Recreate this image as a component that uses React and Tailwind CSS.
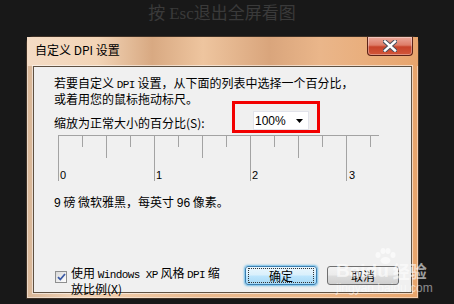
export default function App() {
  const ticks = [];
  for (let i = 0; i <= 13; i++) {
    const x = i * 24 + 0.5;
    const h = i % 4 === 0 ? 46 : i % 2 === 0 ? 23 : 12;
    ticks.push(<line key={i} x1={x} y1={0} x2={x} y2={h} stroke="#a3a3a3" strokeWidth="1" />);
  }

  return (
    <div className="relative w-[454px] h-[304px] overflow-hidden bg-[#181818] font-['Noto_Sans_CJK_SC',sans-serif]">
      <div className="h-[36px] w-[444px] pt-[2px] text-center text-[17px] leading-[20px] text-[#3a3a3a]">
        按 <span className="font-['Liberation_Serif','Noto_Sans_CJK_SC',serif]">Esc</span>退出全屏看图
      </div>

      {/* dialog window */}
      <div className="ml-[26px] w-[393px] h-[263px] rounded-t-[7px] border border-[#3e3025] bg-[linear-gradient(90deg,#d8b697_0%,#f1d2b4_12%,#e9b98e_45%,#ecb585_75%,#e8a56c_100%)] shadow-[inset_0_0_0_1px_rgba(255,255,255,0.45)]">
        <div className="flex h-[29px] items-start justify-between bg-[linear-gradient(90deg,#f4dcc5_0%,#f2d4b6_18%,#d8a982_32%,#eec59f_45%,#d9a57c_62%,#eab68a_75%,#e8a56d_100%)]">
          <span className="pl-[8px] pt-[7px] text-[12px] leading-[12px] text-black">
            自定义 DPI 设置
          </span>
          <div className="mr-[5px] flex h-[19px] w-[46px] items-center justify-center rounded-b-[4px] border border-t-0 border-[#5b2217] bg-[linear-gradient(180deg,#eba89a_0%,#de7d68_45%,#c7432a_55%,#d2573a_100%)] shadow-[inset_0_0_0_1px_rgba(255,255,255,0.35)]">
            <svg width="14" height="12" viewBox="0 0 14 12">
              <path d="M2 1.5 L12 10.5 M12 1.5 L2 10.5" stroke="#4b4f5c" strokeWidth="4.4" strokeLinecap="square" />
              <path d="M2 1.5 L12 10.5 M12 1.5 L2 10.5" stroke="#ffffff" strokeWidth="2.4" strokeLinecap="square" />
            </svg>
          </div>
        </div>

        <div className="relative mx-[6px] h-[227px] border border-[#5f5142] bg-[#f0f0f0] px-[20px] pt-[9px] text-[12px] text-black shadow-[0_0_0_1px_rgba(255,255,255,0.55)]">
          <p className="leading-[13px]">
            若要自定义 <span className="font-['Liberation_Mono',monospace] text-[11px] tracking-[-0.6px]">DPI</span> 设置，从下面的列表中选择一个百分比，
            <br />
            或着用您的鼠标拖动标尺。
          </p>

          <div className="mt-[6px] grid h-[19px] grid-cols-[199px_56px] items-end">
            <span className="mb-[1px] leading-[12px]">缩放为正常大小的百分比(S):</span>
            <div className="flex h-[19px] items-center justify-between border border-[#e2e3ea] bg-white pl-[1px] pr-[5px]">
              <span className="font-['Liberation_Sans',sans-serif] text-[12px] leading-[12px]">100%</span>
              <svg width="7" height="4" viewBox="0 0 7 4">
                <path d="M0 0 H7 L3.5 4 Z" fill="#000" />
              </svg>
            </div>
          </div>

          <svg className="ml-[4px] mt-[5px] block" width="321" height="47" viewBox="0 0 321 47">
            <line x1="0" y1="0.5" x2="321" y2="0.5" stroke="#a3a3a3" strokeWidth="1" />
            {ticks}
            <g fontFamily="Liberation Sans, sans-serif" fontSize="11" fill="#000">
              <text x="2" y="44">0</text>
              <text x="98" y="44">1</text>
              <text x="194" y="44">2</text>
              <text x="291" y="44">3</text>
            </g>
          </svg>

          <p className="mt-[14px] leading-[12px]">
            <span className="font-['Liberation_Sans',sans-serif]">9</span> 磅 微软雅黑，每英寸 <span className="font-['Liberation_Sans',sans-serif]">96</span> 像素。
          </p>

          <div className="mt-[57px] flex items-start">
            <div className="ml-[1px] mt-[5px] flex h-[12px] w-[12px] items-center justify-center border border-[#8e8f8f] bg-[linear-gradient(135deg,#d8d8d8,#ffffff)]">
              <svg width="9" height="8" viewBox="0 0 9 8">
                <path d="M1 4.2 L3.3 6.5 L8 1" fill="none" stroke="#3b5aa5" strokeWidth="1.8" />
              </svg>
            </div>
            <p className="ml-[4px] leading-[13px]">
              使用 <span className="font-['Liberation_Mono',monospace] text-[11px] tracking-[-0.6px]">Windows XP</span> 风格 <span className="font-['Liberation_Mono',monospace] text-[11px] tracking-[-0.6px]">DPI</span> 缩
              <br />
              放比例(X)
            </p>
            <div className="ml-auto mr-[-8px] flex gap-[10px]">
              <div className="flex h-[19px] w-[72px] items-center justify-center rounded-[3px] border border-[#3c7fb1] bg-[linear-gradient(180deg,#eaf6fd_0%,#d9f0fc_48%,#bee6fd_52%,#a7d9f5_100%)] shadow-[0_0_2px_1px_rgba(60,170,230,0.7)]">
                <div className="flex h-[15px] w-[66px] items-center justify-center border border-dotted border-[#333]">
                  <span className="leading-[12px]">确定</span>
                </div>
              </div>
              <div className="flex h-[19px] w-[72px] items-center justify-center rounded-[3px] border border-[#707070] bg-[linear-gradient(180deg,#f2f2f2_0%,#ebebeb_48%,#dddddd_52%,#cfcfcf_100%)]">
                <span className="leading-[12px]">取消</span>
              </div>
            </div>
          </div>

          {/* red annotation box */}
          <div className="absolute left-[198px] top-[34px] h-[32px] w-[88px] border-[3px] border-[#f20000]" />
        </div>
      </div>

      {/* watermark */}
      <div className="absolute left-[336px] top-[248px] flex flex-col items-start text-white/60">
        <svg className="ml-[38px]" width="22" height="16" viewBox="0 0 22 16">
          <g fill="rgba(255,255,255,0.6)">
            <ellipse cx="4" cy="7" rx="2.5" ry="3" />
            <ellipse cx="9" cy="3" rx="2.5" ry="3" />
            <ellipse cx="14" cy="3" rx="2.5" ry="3" />
            <ellipse cx="19" cy="7" rx="2.5" ry="3" />
            <ellipse cx="11.5" cy="12.5" rx="5" ry="3.5" />
          </g>
        </svg>
        <div className="-mt-[2px] flex items-end font-['Liberation_Sans',sans-serif] text-[19px] font-bold leading-[18px]">
          <span>Bai</span><span>du</span>
          <span className="ml-[4px] font-['Noto_Sans_CJK_SC',sans-serif] text-[17px]">经验</span>
        </div>
        <span className="mt-[2px] font-['Liberation_Sans',sans-serif] text-[12px] leading-[12px] text-white/50">
          jingyan.baidu.com
        </span>
      </div>
    </div>
  );
}
